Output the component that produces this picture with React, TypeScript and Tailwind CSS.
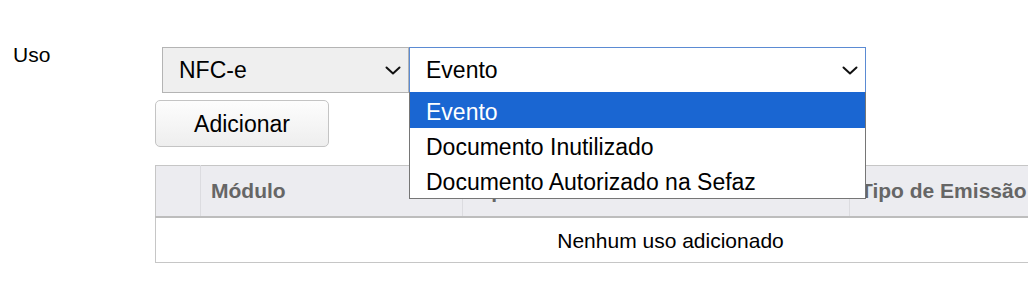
import type { ReactNode } from 'react'

function Chevron() {
  return (
    <svg width="16" height="9" viewBox="0 0 16 9" fill="none" aria-hidden="true">
      <path d="M1.5 1.5 L8 7.5 L14.5 1.5" stroke="#111" strokeWidth="2" strokeLinecap="round" strokeLinejoin="round" />
    </svg>
  )
}

function SelectBox({ value, className, children }: { value: string; className: string; children?: ReactNode }) {
  return (
    <div className={`relative flex h-[46px] items-center justify-between border pl-[16px] pr-[7px] text-[23px] text-black ${className}`}>
      <span>{value}</span>
      <Chevron />
      {children}
    </div>
  )
}

const options = ['Evento', 'Documento Inutilizado', 'Documento Autorizado na Sefaz']

export default function App() {
  return (
    <div className="h-[305px] w-[1028px] overflow-hidden bg-white font-['Liberation_Sans',Arial,sans-serif]">
      <div className="flex">
        <div className="w-[155px] shrink-0 pl-[13px] pt-[43px] text-[21px] leading-[24px] text-black">Uso</div>
        <div className="flex shrink-0 flex-col pt-[47px]">
          <div className="ml-[7px] flex">
            <SelectBox value="NFC-e" className="w-[247px] border-[#b4b4b4] bg-[#efefef]" />
            <SelectBox value="Evento" className="z-10 w-[457px] border-[#5b8bd3] bg-white">
              <div className="absolute left-[-1px] right-[-1px] top-full border-x border-b border-[#767676] bg-white">
                {options.map((opt, i) => (
                  <div
                    key={opt}
                    className={`flex items-center pl-[16px] pt-[4px] ${i === 0 ? 'h-[36px] bg-[#1a66d2] text-white' : 'h-[35px] text-black'}`}
                  >
                    {opt}
                  </div>
                ))}
              </div>
            </SelectBox>
          </div>
          <button className="mt-[7px] h-[47px] w-[174px] rounded-[5px] border border-[#c4c4c4] bg-gradient-to-b from-[#fdfdfd] to-[#eeeeee] pt-[2px] text-[23px] text-black">
            Adicionar
          </button>
          <table className="mt-[18px] w-[1030px] table-fixed border-collapse border border-[#c6c6c6] text-[21px]">
            <colgroup>
              <col className="w-[45px]" />
              <col className="w-[262px]" />
              <col className="w-[387px]" />
              <col className="w-[336px]" />
            </colgroup>
            <thead>
              <tr className="h-[51px] border-b-2 border-[#bdbdbd] bg-[#ececf0] text-left font-bold text-[#666]">
                <th className="border-r border-[#dcdce0]"></th>
                <th className="border-r border-[#dcdce0] pl-[10px]">Módulo</th>
                <th className="border-r border-[#dcdce0] pl-[10px]">Tipo de Uso</th>
                <th className="pl-[10px] whitespace-nowrap">Tipo de Emissão</th>
              </tr>
            </thead>
            <tbody>
              <tr className="h-[46px]">
                <td colSpan={4} className="pt-[2px] text-center text-black">
                  Nenhum uso adicionado
                </td>
              </tr>
            </tbody>
          </table>
        </div>
      </div>
    </div>
  )
}
